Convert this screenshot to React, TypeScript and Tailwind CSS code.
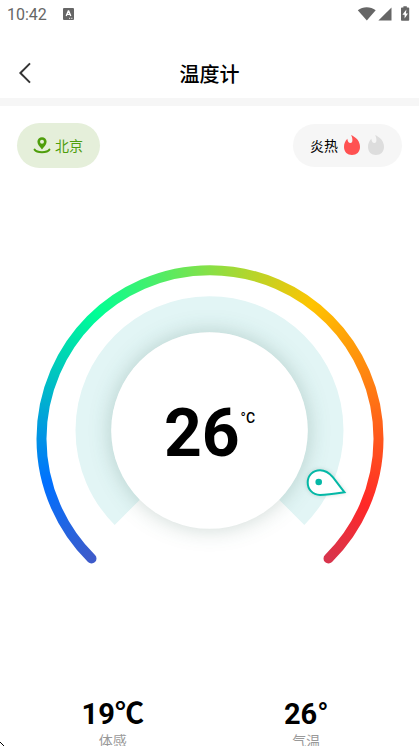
import React from 'react';

const StatusBar: React.FC = () => {
  return (
    <div className="flex h-7 items-center justify-between pl-[7px] pr-[9px] text-[#666666]">
      <div className="flex items-center gap-4">
        <span className="font-['Roboto',sans-serif] pt-0.5 text-base leading-7">10:42</span>
        <svg className="h-3 w-[11px]" viewBox="0 0 11 12">
          <rect width="11" height="12" rx="1" fill="currentColor" />
          <path d="M3.2 8 5.3 3h.4L7.8 8M4 6.4h3" fill="none" stroke="#fff" strokeWidth="1.3" />
          <path d="M6 10.3h1.2M8.2 10.3h1.2" stroke="#fff" strokeWidth="0.9" />
        </svg>
      </div>
      <svg className="h-4 w-[54px]" viewBox="0 0 54 16">
        <path d="M1.8 4.2C6.8 0.2 14.6 0.2 19.7 4.2L10.8 14.6Z" fill="currentColor" />
        <path d="M35.5 1.6V14.6H22.4Z" fill="currentColor" />
        <path d="M47.4 0.2h3.4V1.4h1.6q.8 0 .8.8v11.8q0 .8-.8.8h-6.6q-.8 0-.8-.8V2.2q0-.8.8-.8h1.6Z" fill="currentColor" />
        <path d="M50.4 3.6 46.4 8.8h2.2v3.6l3.4-5h-2.1Z" fill="#fff" />
      </svg>
    </div>
  );
};

const Header: React.FC = () => {
  return (
    <header className="relative flex h-[78px] items-center justify-center border-b-8 border-[#f6f6f6] pt-[22px]">
      <button type="button" aria-label="返回" className="absolute left-2.5 top-[30px] flex h-7 w-7 items-center justify-center">
        <svg className="h-6 w-6" viewBox="0 0 24 24" fill="none" stroke="#333333" strokeWidth="2">
          <path d="M18 3.4 8.4 13 18 22.6" />
        </svg>
      </button>
      <h1 className="text-xl font-medium leading-7">温度计</h1>
    </header>
  );
};

const Flame: React.FC<{ className: string }> = ({ className }) => {
  return (
    <svg className={`h-5 w-4 ${className}`} viewBox="0 0 16 20" fill="currentColor">
      <path d="M7 0C9 0.8 12 2.8 13.4 4.6C15.2 7 16 9.4 16 12C16 17 12.5 20 8 20C3.5 20 0 17 0 12C0 8.6 1.2 6 3.3 3.8C3.6 5.6 4.2 7.6 6 8C7.8 8.2 8.4 6.8 8.4 5C8.4 3 7.8 1.4 7 0Z" />
    </svg>
  );
};

const ARC = 'M91.5 366.5A168.5 168.5 0 1 1 328.5 366.5';

const Gauge: React.FC = () => {
  return (
    <div className="relative mt-6">
      <svg className="block w-full" viewBox="0 0 419 440">
        <defs>
          <mask id="arc" maskUnits="userSpaceOnUse" x="0" y="0" width="419" height="440">
            <path d={ARC} fill="none" stroke="#fff" strokeWidth="10" strokeLinecap="round" />
          </mask>
          <filter id="glow" x="-30%" y="-30%" width="160%" height="160%" colorInterpolationFilters="sRGB">
            <feDropShadow dx="0" dy="0" stdDeviation="11" floodColor="#104838" floodOpacity="0.22" />
          </filter>
          <filter id="soft" x="-30%" y="-30%" width="160%" height="160%" colorInterpolationFilters="sRGB">
            <feDropShadow dx="0" dy="0" stdDeviation="2" floodColor="#104838" floodOpacity="0.18" />
          </filter>
        </defs>
        <foreignObject x="30" y="67" width="360" height="360" mask="url(#arc)">
          <div className="h-full w-full bg-[conic-gradient(from_225deg,#3d5bca_0deg,#0070ff_30deg,#00ff95_93deg,#ffc400_172deg,#ff2828_248deg,#d8344c_270deg,#d8344c_315deg,#3d5bca_315deg)]" />
        </foreignObject>
        <path d="M127.4 320.2A116 116 0 1 1 291.6 320.2" fill="none" stroke="#e2f5f5" strokeWidth="36" />
        <circle cx="209.5" cy="238.5" r="98.3" fill="#fff" filter="url(#glow)" />
        <g filter="url(#soft)">
          <path
            d="M344.4 300.2C335 301.7 328 302.9 320 302.9C312.4 302.8 307.7 297.2 307.7 290.4C307.7 283.2 313.2 278.3 320 278.3C325.8 278.3 329.4 281.1 332.8 285.2C336.6 289.9 340.2 295.1 344.4 300.2Z"
            fill="#fff"
            stroke="#04b8a6"
            strokeWidth="2"
          />
        </g>
        <circle cx="318.7" cy="290" r="3.3" fill="#04b8a6" />
      </svg>
      <div className="absolute inset-x-0 top-[55%] flex -translate-y-1/2 justify-center font-['Roboto',sans-serif] font-bold">
        <div className="flex items-start gap-px">
          <span className="text-[66px] leading-[68px]">26</span>
          <span className="pt-2 text-sm font-medium leading-5">°C</span>
        </div>
      </div>
    </div>
  );
};

const readings = [
  { value: '19℃', label: '体感' },
  { value: '26°', label: '气温' },
];

export default function App() {
  return (
    <div className="relative h-screen overflow-hidden bg-white font-['Noto_Sans_CJK_SC',sans-serif] text-black">
      <StatusBar />
      <Header />
      <main>
        <div className="flex items-center justify-between px-[17px] pt-[17px]">
          <button type="button" className="flex h-[45px] items-center gap-1 rounded-full bg-[#e5efda] pl-4 pr-[17px] pb-0.5 text-sm text-[#4f9e0c]">
            <svg className="h-[18px] w-[18px]" viewBox="0 0 18 18">
              <path
                d="M9 1.2a4.6 4.6 0 0 0-4.6 4.6C4.4 8.8 7 10.7 9 13.4C11 10.7 13.6 8.8 13.6 5.8A4.6 4.6 0 0 0 9 1.2ZM9 7.7A2 2 0 1 1 9 3.7A2 2 0 0 1 9 7.7Z"
                fill="currentColor"
                fillRule="evenodd"
              />
              <path d="M1.6 13.6C3.8 17 14.2 17 16.4 13.6" fill="none" stroke="currentColor" strokeWidth="2" strokeLinecap="round" />
            </svg>
            北京
          </button>
          <div className="flex h-[43px] items-center rounded-full bg-[#f6f6f6] pl-[17px] pr-[18px] pb-0.5 text-sm">
            炎热
            <Flame className="ml-1.5 text-[#ff5252]" />
            <Flame className="ml-2 text-[#dddddd]" />
          </div>
        </div>
        <Gauge />
        <div className="mx-4 mt-[66px] grid grid-cols-2">
          {readings.map((item) => (
            <div key={item.label} className="flex flex-col items-center">
              <span className="font-['Roboto','Noto_Sans_CJK_SC',sans-serif] text-[29px] font-bold leading-8">{item.value}</span>
              <span className="text-sm leading-5 text-[#999999]">{item.label}</span>
            </div>
          ))}
        </div>
      </main>
      <svg className="absolute bottom-0 left-0 h-1 w-1" viewBox="0 0 4 4" stroke="#000">
        <path d="M0 0 4 4" />
      </svg>
    </div>
  );
}
